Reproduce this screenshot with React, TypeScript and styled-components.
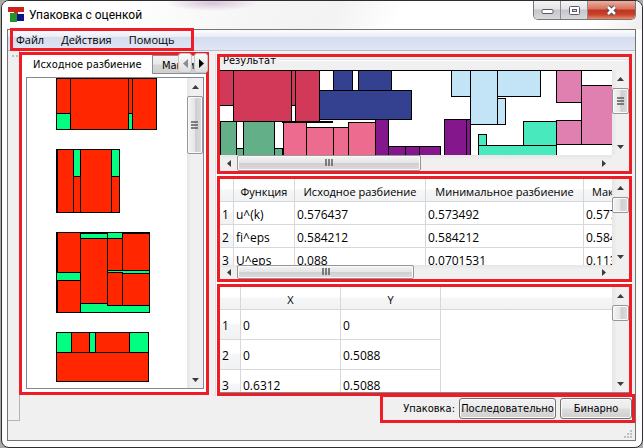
import React from "react";
import styled, { createGlobalStyle, css } from "styled-components";

const RED = "#ee1c25";
const UI = '"Open Sans", "Noto Sans", sans-serif';
const CAPTION = 'Roboto, "Open Sans", sans-serif';
const DIALOG = '"DejaVu Sans Condensed", "DejaVu Sans", sans-serif';

const GlobalStyle = createGlobalStyle`
  *, *::before, *::after { box-sizing: border-box; }
  body { margin: 0; background: #a9a9a9; color: #000; font: 12px/16px ${UI}; }
  button { font: inherit; color: inherit; padding: 0; margin: 0; border: 0; background: none; }
  svg { display: block; flex: none; }
`;

const Window = styled.div`
  min-height: 100vh;
  margin-left: 1px;
  display: flex;
  flex-direction: column;
  border: 1px solid #2e2c2f;
  border-radius: 8px;
  overflow: hidden;
  background: #fcfcfc;
`;

const TitleBar = styled.header`
  height: 28px;
  display: flex;
  align-items: flex-start;
  padding: 0 6px;
  background:
    radial-gradient(ellipse 46px 8px at 210px 2px, #d8c2d8, transparent),
    linear-gradient(115deg, #fff 18%, #f5f5f5 40%, #f3f3f3 52%, #fff 62%, #fff 92%, #eee);
`;

const AppTitle = styled.h1`
  margin: 5px 0 0 5px;
  flex: 1;
  font: 12px/18px ${CAPTION};
`;

const AppIcon = styled.svg`
  margin-top: 6px;
`;

const WindowControls = styled.div`
  display: flex;
  height: 19px;
  border: 1px solid #77757a;
  border-top: 0;
  border-radius: 0 0 5px 5px;
  overflow: hidden;
`;

const WindowControl = styled.button<{ $close?: boolean }>`
  width: ${(p) => (p.$close ? 47 : 27)}px;
  display: flex;
  align-items: center;
  justify-content: center;
  border-right: ${(p) => (p.$close ? 0 : 1)}px solid #8c8a8e;
  background: ${(p) =>
    p.$close
      ? "linear-gradient(#eab0a0, #d8705c 45%, #bf321e 50%, #c8432c 75%, #e88a6c)"
      : "linear-gradient(#f4f4f5, #e3e3e5 45%, #c6c6ca 50%, #d9d9dc)"};
`;

const Client = styled.div`
  flex: 1;
  margin: 0 6px 6px 5px;
  border: 1px solid #737373;
  background: #f0f0f0;
  display: flex;
  flex-direction: column;
`;

const MenuBar = styled.div`
  height: 21px;
  flex: none;
  display: flex;
  align-items: flex-start;
  border-bottom: 1px solid #b6bccc;
  background: linear-gradient(#fcfdfe, #e9edf6 33%, #d5dcee 36%, #e0e6f4);
`;

const Menu = styled.nav`
  height: 23px;
  margin: -2px 0 0 2px;
  padding: 0 17px 0 3px;
  display: flex;
  align-items: center;
  gap: 17px;
  border: 3px solid ${RED};
  font: 11px/17px ${UI};
`;

const Workspace = styled.main`
  flex: 1;
  display: grid;
  grid-template-columns: 12px 189px minmax(0, 1fr);
  grid-template-rows: minmax(344px, 1fr) auto;
`;

const ToolStrip = styled.aside`
  grid-row: 1 / 3;
  margin-bottom: 2px;
  padding: 3px 4px;
  border-right: 1px solid #b4b4b4;
  border-bottom: 1px solid #b4b4b4;
`;

const SplitPanel = styled.section`
  position: relative;
  margin: 1px 0 1px -1px;
  padding: 0 2px 3px 4px;
  border: 3px solid ${RED};
  background: #fff;
  display: flex;
  flex-direction: column;
`;

const Tabs = styled.div`
  height: 19px;
  margin: 0 -2px 3px -4px;
  display: flex;
  overflow: hidden;
  font: 11px/20px ${DIALOG};
`;

const Tab = styled.button<{ $active?: boolean }>`
  flex: none;
  white-space: nowrap;
  ${(p) =>
    p.$active
      ? css`
          width: 130px;
          padding-left: 11px;
          text-align: left;
        `
      : css`
          padding: 0 9px;
          border: 1px solid #8b8e94;
          background: linear-gradient(#f2f2f2, #e8e8e8 48%, #d6d6d6 52%, #cfcfcf);
        `}
`;

const TabScroller = styled.div`
  position: absolute;
  top: -2px;
  right: -2px;
  display: flex;
  gap: 2px;
`;

const TabArrow = styled.button`
  width: 14px;
  height: 20px;
  display: flex;
  align-items: center;
  justify-content: center;
  border: 1px solid #c6c6c6;
  border-radius: 3px;
  background: linear-gradient(#fafafa, #ececec 50%, #dedede);
`;

const SplitView = styled.div`
  flex: 1;
  display: grid;
  grid-template-columns: minmax(0, 1fr) 16px;
  border: 1px solid #828790;
`;

const Clip = styled.div`
  overflow: hidden;
  min-width: 0;
  min-height: 0;
  background: #fff;
`;

const TableView = styled(Clip)`
  contain: size;
`;

const RightColumn = styled.div`
  margin: 3px 3px 0 6px;
  padding-left: 2px;
  border-left: 1px solid #dde1e4;
  background: #fff;
  display: grid;
  grid-template-rows: 120px 106px minmax(111px, 1fr);
  row-gap: 2px;
  min-width: 0;
`;

const Panel = styled.section`
  border: 3px solid ${RED};
  min-width: 0;
  min-height: 0;
  margin-left: -1px;
  display: flex;
  flex-direction: column;
  overflow: hidden;
  background: #f0f0f0;
`;

const GroupTitle = styled.h2`
  height: 13px;
  flex: none;
  margin: 0;
  padding-left: 3px;
  display: flex;
  align-items: center;
  gap: 3px;
  overflow: hidden;
  font: 11px/12px ${DIALOG};
  &::after {
    content: "";
    flex: 1;
    height: 2px;
    margin-bottom: 8px;
    background: linear-gradient(#d5dfe5 50%, #fff 50%);
  }
  span { margin-top: -6px; }
`;

const ScrollGrid = styled.div<{ $bar: number; $line?: boolean }>`
  flex: 1;
  min-height: 0;
  display: grid;
  grid-template-columns: minmax(0, 1fr) 17px;
  grid-template-rows: minmax(0, 1fr) ${(p) => (p.$bar ? `${p.$bar}px` : "")};
  border-bottom: ${(p) => (p.$line ? 1 : 0)}px solid #828790;
`;

const Bar = styled.div<{ $horizontal?: boolean }>`
  display: flex;
  flex-direction: ${(p) => (p.$horizontal ? "row" : "column")};
  min-width: 0;
  min-height: 0;
  background: linear-gradient(${(p) => (p.$horizontal ? "180deg" : "90deg")}, #e6e6e6, #f0f0f0 30%);
`;

const BarArrow = styled.button<{ $horizontal?: boolean }>`
  flex: none;
  width: ${(p) => (p.$horizontal ? "17px" : "100%")};
  height: ${(p) => (p.$horizontal ? "100%" : "17px")};
  display: flex;
  align-items: center;
  justify-content: center;
`;

const Thumb = styled.div<{ $horizontal?: boolean; $size: number }>`
  flex: none;
  display: flex;
  align-items: center;
  justify-content: center;
  border: 1px solid #969696;
  border-radius: 2px;
  box-shadow: inset 0 0 0 1px #fafafa;
  ${(p) =>
    p.$horizontal
      ? css`
          width: ${p.$size}px;
          background: linear-gradient(#f3f3f3, #e6e6e8 48%, #cfcfd2 52%, #dcdcdf);
        `
      : css`
          height: ${p.$size}px;
          background: linear-gradient(90deg, #f3f3f3, #e6e6e8 48%, #cfcfd2 52%, #dcdcdf);
        `}
`;

const Spacer = styled.div<{ $size?: number }>`
  flex: ${(p) => (p.$size === undefined ? "1" : `0 0 ${p.$size}px`)};
`;

const DataTable = styled.table<{ $row: number; $width?: number }>`
  table-layout: fixed;
  width: ${(p) => (p.$width ? `${p.$width}px` : "100%")};
  border-collapse: separate;
  border-spacing: 0;
  white-space: nowrap;
  th, td {
    padding: 3px 2px 0;
    height: ${(p) => p.$row}px;
    border-right: 1px solid #d8d8d8;
    border-bottom: 1px solid #d8d8d8;
    font-weight: 400;
    line-height: 16px;
    text-align: left;
    overflow: hidden;
  }
  thead th {
    height: 23px;
    text-align: center;
    font-size: 11px;
    background: linear-gradient(#fff 45%, #f5f6f8 50%, #f1f2f4);
  }
  th:first-child {
    background: linear-gradient(#fff 45%, #f5f6f8 50%, #f1f2f4);
  }
  td:last-child { border-bottom-color: ${(p) => (p.$width ? "#d8d8d8" : "transparent")}; }
  td:last-child, th:last-child { border-right: 0; }
  thead th:last-child { text-align: left; padding-left: 8px; }
`;

const Footer = styled.footer`
  grid-column: 3;
  justify-self: end;
  position: relative;
  height: 29px;
  margin: -2px 0 0;
  padding: 0 0 0 20px;
  display: flex;
  align-items: center;
  gap: 4px;
  border: 3px solid ${RED};
  background: #f0f0f0;
  font: 11px/14px ${DIALOG};
`;

const PushButton = styled.button<{ $width: number }>`
  width: ${(p) => p.$width}px;
  height: 21px;
  border: 1px solid #707070;
  border-radius: 3px;
  box-shadow: inset 0 0 0 1px #fafafa;
  background: linear-gradient(#f2f2f2, #ebebeb 48%, #dddddd 52%, #cfcfcf);
  white-space: nowrap;
`;

const StatusBar = styled.div`
  height: 17px;
  flex: none;
  padding: 7px 3px 0;
  display: flex;
  justify-content: flex-end;
`;

type Block = [string, number, number, number, number];

function Blocks({ items }: { items: Block[] }) {
  return (
    <g stroke="#000" strokeWidth="1">
      {items.map(([fill, x1, y1, x2, y2], i) => (
        <rect key={i} x={x1 + 0.5} y={y1 + 0.5} width={x2 - x1} height={y2 - y1} fill={fill} />
      ))}
    </g>
  );
}

const R = "#ff2600";
const G = "#00ff80";

const partitions: Block[] = [
  [R, 56, 78, 70, 113], [G, 56, 113, 70, 129], [R, 70, 78, 128, 129],
  [R, 128, 78, 132, 113], [G, 128, 113, 132, 129], [R, 132, 78, 156, 129],

  [R, 56, 149, 119, 212], [R, 57, 149, 73, 212], [G, 73, 149, 80, 176], [R, 73, 176, 80, 212],
  [R, 80, 149, 111, 212], [G, 111, 149, 119, 176], [R, 111, 176, 119, 212],

  [G, 56, 232, 149, 312], [R, 57, 232, 80, 272], [G, 56, 272, 80, 280], [R, 57, 280, 80, 312],
  [G, 80, 233, 107, 238], [R, 80, 238, 107, 303],
  [R, 107, 238, 122, 270], [R, 122, 233, 149, 270],
  [R, 107, 272, 122, 305], [R, 122, 273, 149, 305],

  [G, 56, 332, 71, 352], [R, 71, 332, 89, 352], [G, 89, 332, 95, 352],
  [R, 95, 332, 129, 352], [G, 129, 332, 148, 352], [R, 56, 352, 148, 381],
];

const crimson = "#d23858";
const navy = "#334190";
const moss = "#62af88";
const rose = "#ed6b8f";
const violet = "#85178c";
const sky = "#c3e4f7";
const teal = "#48e9bc";
const orchid = "#df80b0";

const packing: Block[] = [
  [crimson, 218, 70, 233, 105], [crimson, 233, 70, 291, 121], [crimson, 291, 70, 295, 105],
  [crimson, 295, 70, 319, 121],
  [navy, 333, 70, 352, 90], [navy, 358, 70, 391, 90], [navy, 319, 90, 411, 119],
  [moss, 220, 121, 236, 160], [moss, 236, 148, 243, 160], [moss, 243, 121, 274, 160],
  [moss, 274, 148, 282, 160],
  [rose, 283, 121, 306, 160], [rose, 306, 127, 333, 160], [rose, 333, 127, 348, 160],
  [rose, 348, 122, 375, 160],
  [violet, 375, 119, 388, 160], [violet, 388, 146, 405, 160], [violet, 405, 146, 419, 160],
  [violet, 419, 146, 440, 160], [violet, 444, 119, 466, 160], [violet, 466, 119, 470, 160],
  [sky, 451, 70, 470, 96], [sky, 470, 70, 497, 124], [sky, 497, 70, 540, 96],
  [sky, 497, 98, 505, 124],
  [teal, 478, 134, 486, 145], [teal, 523, 121, 556, 145], [teal, 478, 145, 556, 160],
  [orchid, 556, 70, 581, 102], [orchid, 581, 85, 615, 144], [orchid, 556, 120, 581, 144],
];

const arrowPath = {
  up: "M3.5 0 7 4H0Z",
  down: "M0 0H7L3.5 4Z",
  left: "M4 0V7L0 3.5Z",
  right: "M0 0 4 3.5 0 7Z",
};

function Arrow({ to, color = "#3c3c3c" }: { to: keyof typeof arrowPath; color?: string }) {
  const vertical = to === "up" || to === "down";
  return (
    <svg width={vertical ? 7 : 4} height={vertical ? 4 : 7} aria-hidden="true">
      <path d={arrowPath[to]} fill={color} />
    </svg>
  );
}

function TabArrowIcon({ left, color }: { left?: boolean; color: string }) {
  return (
    <svg width="5" height="9" aria-hidden="true">
      <path d={left ? "M5 0V9L0 4.5Z" : "M0 0 5 4.5 0 9Z"} fill={color} />
    </svg>
  );
}

interface ScrollProps {
  horizontal?: boolean;
  offset?: number;
  size: number;
  grip?: boolean;
}

function ScrollBar({ horizontal, offset = 0, size, grip = true }: ScrollProps) {
  return (
    <Bar $horizontal={horizontal}>
      <BarArrow $horizontal={horizontal} aria-label={horizontal ? "Влево" : "Вверх"}>
        <Arrow to={horizontal ? "left" : "up"} />
      </BarArrow>
      <Spacer $size={offset} />
      <Thumb $horizontal={horizontal} $size={size}>
        {grip && (
          <svg width="8" height="8" aria-hidden="true">
            <path
              d={horizontal ? "M1 0V7M4 0V7M7 0V7" : "M0 1H7M0 4H7M0 7H7"}
              stroke="#5c5c5c"
              strokeWidth="1.5"
            />
          </svg>
        )}
      </Thumb>
      <Spacer />
      <BarArrow $horizontal={horizontal} aria-label={horizontal ? "Вправо" : "Вниз"}>
        <Arrow to={horizontal ? "right" : "down"} />
      </BarArrow>
    </Bar>
  );
}

const estimates = [
  ["u^(k)", "0.576437", "0.573492", "0.577"],
  ["fi^eps", "0.584212", "0.584212", "0.584"],
  ["U^eps", "0.088", "0.0701531", "0.113"],
];

const points = [
  ["0", "0"],
  ["0", "0.5088"],
  ["0.6312", "0.5088"],
];

export default function App() {
  return (
    <>
      <GlobalStyle />
      <Window>
        <TitleBar>
          <AppIcon width="16" height="16" aria-hidden="true">
            <path d="M0 0H16V5H10V8H6V5H0Z" fill="#cf2020" />
            <path d="M2 6H9V15H2Z" fill="#269326" />
            <path d="M9 7H16V14H9Z" fill="#10108f" />
          </AppIcon>
          <AppTitle>Упаковка с оценкой</AppTitle>
          <WindowControls>
            <WindowControl aria-label="Свернуть">
              <svg width="13" height="8">
                <rect x="1" y="3.5" width="11" height="4" rx="1" fill="#fff" stroke="#5a5868" />
              </svg>
            </WindowControl>
            <WindowControl aria-label="Развернуть">
              <svg width="13" height="11">
                <rect x="1.5" y="1.5" width="10" height="8" rx="1" fill="#fff" stroke="#5a5868" />
                <rect x="4.5" y="4.5" width="4" height="2" fill="#ddd" stroke="#5a5868" />
              </svg>
            </WindowControl>
            <WindowControl $close aria-label="Закрыть">
              <svg width="13" height="11">
                <path d="M3 2 10 9M10 2 3 9" stroke="#564a5c" strokeWidth="4.6" />
                <path d="M3 2 10 9M10 2 3 9" stroke="#fff" strokeWidth="2.6" />
              </svg>
            </WindowControl>
          </WindowControls>
        </TitleBar>
        <Client>
          <MenuBar>
            <Menu>
              <button>Файл</button>
              <button>Действия</button>
              <button>Помощь</button>
            </Menu>
          </MenuBar>
          <Workspace>
            <ToolStrip>
              <svg width="6" height="3" aria-hidden="true">
                <path d="M0 1h2v2H0zM4 1h2v2H4z" fill="#bdbdbd" />
              </svg>
            </ToolStrip>
            <SplitPanel>
              <Tabs role="tablist">
                <Tab $active role="tab" aria-selected="true">Исходное разбиение</Tab>
                <Tab role="tab" aria-selected="false">Максимальное</Tab>
              </Tabs>
              <TabScroller>
                <TabArrow aria-label="Предыдущая вкладка"><TabArrowIcon left color="#8c8c8c" /></TabArrow>
                <TabArrow aria-label="Следующая вкладка"><TabArrowIcon color="#000" /></TabArrow>
              </TabScroller>
              <SplitView>
                <Clip>
                  <svg width="160" height="309" viewBox="27 78 160 309">
                    <Blocks items={partitions} />
                  </svg>
                </Clip>
                <ScrollBar offset={1} size={58} />
              </SplitView>
            </SplitPanel>
            <RightColumn>
              <Panel>
                <GroupTitle><span>Результат</span></GroupTitle>
                <ScrollGrid $bar={16}>
                  <Clip>
                    <svg width="392" height="85" viewBox="220 70 392 85">
                      <Blocks items={packing} />
                      <path d="M220 70.5H612M556 144.5H612" stroke="#000" />
                      <path d="M282 122H333" stroke="#000" strokeWidth="2" />
                    </svg>
                  </Clip>
                  <ScrollBar offset={1} size={26} />
                  <ScrollBar horizontal size={184} />
                </ScrollGrid>
              </Panel>
              <Panel>
                <ScrollGrid $bar={14}>
                  <TableView>
                    <DataTable $row={23} $width={499}>
                      <colgroup>
                        <col width="14" />
                        <col width="61" />
                        <col width="131" />
                        <col width="158" />
                        <col width="135" />
                      </colgroup>
                      <thead>
                        <tr>
                          <th />
                          <th>Функция</th>
                          <th>Исходное разбиение</th>
                          <th>Минимальное разбиение</th>
                          <th>Максимальное</th>
                        </tr>
                      </thead>
                      <tbody>
                        {estimates.map((row, i) => (
                          <tr key={i}>
                            <th scope="row">{i + 1}</th>
                            {row.map((value, j) => <td key={j}>{value}</td>)}
                          </tr>
                        ))}
                      </tbody>
                    </DataTable>
                  </TableView>
                  <ScrollBar offset={1} size={16} grip={false} />
                  <ScrollBar horizontal size={177} />
                </ScrollGrid>
              </Panel>
              <Panel>
                <ScrollGrid $bar={0} $line>
                  <TableView>
                    <DataTable $row={30}>
                      <colgroup>
                        <col width="21" />
                        <col width="100" />
                        <col width="100" />
                        <col />
                      </colgroup>
                      <thead>
                        <tr><th /><th>X</th><th>Y</th><th /></tr>
                      </thead>
                      <tbody>
                        {points.map(([x, y], i) => (
                          <tr key={i}><th scope="row">{i + 1}</th><td>{x}</td><td>{y}</td><td /></tr>
                        ))}
                      </tbody>
                    </DataTable>
                  </TableView>
                  <ScrollBar offset={1} size={16} grip={false} />
                </ScrollGrid>
              </Panel>
            </RightColumn>
            <Footer>
              <span>Упаковка:</span>
              <PushButton $width={97}>Последовательно</PushButton>
              <PushButton $width={72}>Бинарно</PushButton>
            </Footer>
          </Workspace>
          <StatusBar>
            <svg width="8" height="8" aria-hidden="true">
              <path d="M6 0h2v2H6zM6 3h2v2H6zM3 3h2v2H3zM6 6h2v2H6zM3 6h2v2H3zM0 6h2v2H0z" fill="#bfbfbf" />
            </svg>
          </StatusBar>
        </Client>
      </Window>
    </>
  );
}
